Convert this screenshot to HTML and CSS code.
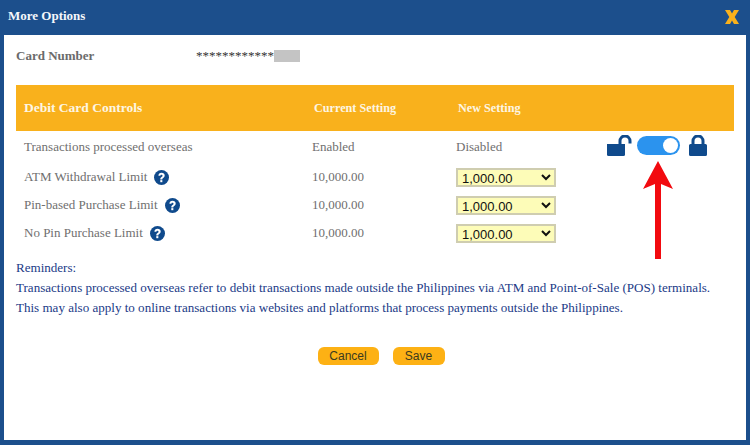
FILE: index.html
```html
<!DOCTYPE html>
<html lang="en">
<head>
<meta charset="utf-8">
<title>More Options</title>
<link rel="stylesheet" href="styles.css">
</head>
<body>
<div class="modal">
  <header class="titlebar">
    <h1 class="title">More Options</h1>
    <svg class="close" width="14" height="14" viewBox="0 0 14 14"><path d="M0 0h5l2 3.500L9 0h5L9.700 7 14 14H9L7 10.500 5 14H0l4.300-7z" fill="#f9b11c"/></svg>
  </header>
  <main class="body">
    <div class="card-row">
      <span class="card-label">Card Number</span>
      <span class="card-value">************<span class="masked"></span></span>
    </div>
    <div class="controls">
      <div class="row head">
        <span class="head-main">Debit Card Controls</span><span class="head-col">Current Setting</span><span class="head-col">New Setting</span><span></span>
      </div>
      <div class="row first">
        <span>Transactions processed overseas</span><span>Enabled</span><span>Disabled</span>
        <span class="toggle-cell">
          <svg class="lock-open" width="25" height="21" viewBox="0 0 25 21"><path d="M0 9h18v10.500a1.500 1.500 0 0 1-1.500 1.500h-15A1.500 1.500 0 0 1 0 19.500z" fill="#0f4a8c"/><path d="M13 9V6a4.800 4.800 0 0 1 10 0v2.500" fill="none" stroke="#0f4a8c" stroke-width="3"/></svg>
          <span class="switch"><span class="knob"></span></span>
          <svg class="lock-closed" width="18" height="21" viewBox="0 0 18 21"><path d="M1.500 9h15A1.500 1.500 0 0 1 18 10.500v9a1.500 1.500 0 0 1-1.500 1.500h-15A1.500 1.500 0 0 1 0 19.500v-9A1.500 1.500 0 0 1 1.500 9z" fill="#0f4a8c"/><path d="M4 10V6a5 5 0 0 1 10 0v4" fill="none" stroke="#0f4a8c" stroke-width="3"/></svg>
        </span>
      </div>
      <div class="row">
        <span class="with-help">ATM Withdrawal Limit <svg class="help" viewBox="0 0 16 16"><use href="#q"/></svg></span><span>10,000.00</span>
        <span><select class="limit"><option>1,000.00</option></select></span><span></span>
      </div>
      <div class="row">
        <span class="with-help">Pin-based Purchase Limit <svg class="help" viewBox="0 0 16 16"><use href="#q"/></svg></span><span>10,000.00</span>
        <span><select class="limit"><option>1,000.00</option></select></span><span></span>
      </div>
      <div class="row">
        <span class="with-help">No Pin Purchase Limit <svg class="help" viewBox="0 0 16 16"><use href="#q"/></svg></span><span>10,000.00</span>
        <span><select class="limit"><option>1,000.00</option></select></span><span></span>
      </div>
    </div>
    <div class="reminders">
      <p>Reminders:</p>
      <p>Transactions processed overseas refer to debit transactions made outside the Philippines via ATM and Point-of-Sale (POS) terminals.</p>
      <p>This may also apply to online transactions via websites and platforms that process payments outside the Philippines.</p>
    </div>
    <div class="actions">
      <button class="btn cancel" type="button">Cancel</button>
      <button class="btn save" type="button">Save</button>
    </div>
  </main>
  <svg class="arrow" width="30" height="98" viewBox="0 0 30 98"><path d="M12 98V23L0 28 15 0l15 28-12-5v75z" fill="#f20a0f"/></svg>
</div>
<svg width="0" height="0" class="defs"><defs>
  <g id="q"><circle cx="8" cy="8" r="8" fill="#0f4a8c"/><path d="M4.700 6.200C4.700 4.300 6.100 3 8 3c2 0 3.400 1.200 3.400 2.900 0 1.300-.7 2-1.600 2.600-.7.500-.9.800-.9 1.500H6.700c0-1.300.4-1.900 1.300-2.500.8-.5 1.100-.9 1.100-1.400 0-.7-.4-1.100-1.100-1.100-.8 0-1.200.5-1.200 1.200z" fill="#fff"/><rect x="6.700" y="10.800" width="2.200" height="2.200" fill="#fff"/></g>
</defs></svg>
</body>
</html>
```

FILE: styles.css
```css
* { box-sizing: border-box; }
html, body { margin: 0; padding: 0; background: #fff; }
body { width: 750px; height: 445px; overflow: hidden; }
.defs { position: absolute; }
.modal {
  position: relative;
  width: 750px;
  height: 445px;
  background: #1c4f8c;
  padding: 0 4px 5px;
  display: flex;
  flex-direction: column;
  font-family: "Liberation Serif", serif;
}
.titlebar {
  height: 35px;
  flex: none;
  display: flex;
  align-items: center;
  justify-content: space-between;
  padding: 0 7px 3px 4px;
}
.title { margin: 0; font-size: 13px; font-weight: bold; color: #f4f7fb; }
.close { margin-top: 1px; }
.body {
  flex: 1;
  background: #fff;
  padding: 0 12px;
  display: flex;
  flex-direction: column;
}
.card-row {
  height: 50px;
  flex: none;
  display: flex;
  align-items: center;
  padding-bottom: 8px;
  font-size: 13px;
  color: #6b6b6b;
}
.card-label { width: 180px; font-weight: bold; }
.card-value { display: flex; align-items: center; color: #333; font-size: 13px; }
.masked { width: 26px; height: 12px; background: #c4c4c4; filter: blur(0.5px); }
.controls { flex: none; }
.row {
  display: grid;
  grid-template-columns: 288px 144px 149px 1fr;
  padding-left: 8px;
  align-items: center;
  height: 28px;
  font-size: 13px;
  color: #6f6f6f;
}
.row.head {
  height: 46px;
  background: #f9b11c;
  color: #fdf6e4;
  font-weight: bold;
}
.head-main { font-size: 13.500px; }
.head-col { font-size: 12.200px; padding-left: 2px; }
.row.first { height: 32px; }
.with-help { display: flex; align-items: center; gap: 7px; }
.help { width: 15px; height: 15px; flex: none; }
.limit {
  width: 100px;
  height: 19px;
  font-family: "Liberation Sans", sans-serif;
  font-size: 13px;
  color: #111;
  background-color: #fdfcb8;
  border: 2px solid #cfcdb0;
  padding: 0;
}
.toggle-cell { display: flex; align-items: center; gap: 5px; margin-left: 2px; }
.lock-open { margin-top: -4px; }
.lock-closed { margin: -4px 0 0 4px; }
.switch {
  width: 43px;
  height: 19px;
  border-radius: 10px;
  background: #2b93ee;
  position: relative;
  display: block;
  margin-top: -3px;
}
.knob {
  position: absolute;
  right: 2px;
  top: 2px;
  width: 15px;
  height: 15px;
  border-radius: 50%;
  background: #fff;
}
.reminders { margin-top: 11px; font-size: 13.050px; color: #213a87; }
.reminders p { margin: 0; line-height: 20px; }
.actions { display: flex; justify-content: center; gap: 14px; margin-top: 29px; padding-left: 12px; }
.btn {
  height: 18px;
  border: 0;
  border-radius: 6px;
  background: #fdb114;
  font-family: "Liberation Sans", sans-serif;
  font-size: 12px;
  color: #3a3a20;
  padding: 0;
}
.cancel { width: 61px; }
.save { width: 52px; }
.arrow { position: absolute; left: 643px; top: 161px; }
```
